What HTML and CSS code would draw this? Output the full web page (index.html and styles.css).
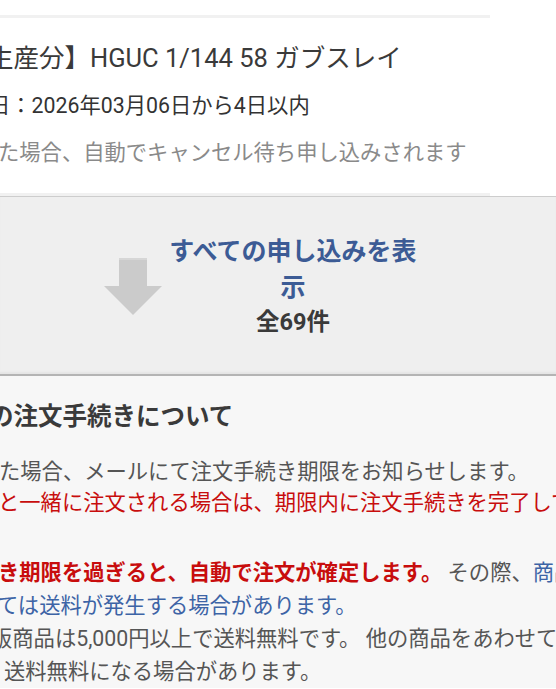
FILE: index.html
```html
<!DOCTYPE html>
<html lang="ja">
<head>
  <meta charset="utf-8">
  <title>申し込み一覧</title>
  <meta name="viewport" content="width=device-width,initial-scale=1">
  <link rel="stylesheet" href="styles.css">
</head>

<body class="entry-page">
  <div class="content">
    <div class="card-edge"></div>

    <div class="card">
      <p class="line item-title cut-title">生産分】HGUC 1/144 58 ガブスレイ</p>
      <p class="line item-date cut-date">日：2026年03月06日から4日以内</p>
      <p class="line item-note cut-note">た場合、自動でキャンセル待ち申し込みされます</p>
    </div>
    <div class="card-edge"></div>

    <a class="show-all" href="#">
      <svg class="show-all_arrow" width="58" height="57" viewBox="0 0 58 57">
        <polygon points="15,0 43,0 43,28 58,28 29,57 0,28 15,28" fill="#cbcbcb"/>
        <polygon points="15,0 43,0 43,2 15,2" fill="#d6d6d6"/>
      </svg>
      <span class="show-all_text">
        <span class="show-all_label">すべての申し込みを表示</span>
        <span class="show-all_count">全69件</span>
      </span>
    </a>

    <section class="notice">
      <h2 class="line notice_title cut-heading">の注文手続きについて</h2>

      <p class="notice_block">
        <span class="line cut-body">た場合、メールにて注文手続き期限をお知らせします。</span>
        <span class="line is-red cut-red">と一緒に注文される場合は、期限内に注文手続きを完了してください。</span>
      </p>

      <p class="notice_block notice_block--wide">
        <span class="line cut-strong"><strong class="is-red">き期限を過ぎると、自動で注文が確定します。</strong> その際、<a class="notice_link" href="#">商品によっては</a></span>
        <span class="line cut-link"><a class="notice_link" href="#">ては送料が発生する場合があります。</a></span>
        <span class="line cut-sales">販商品は5,000円以上で送料無料です。 他の商品をあわせてご注文いただくと</span>
        <span class="line cut-last">送料無料になる場合があります。</span>
      </p>
    </section>
  </div>
</body>
</html>
```

FILE: styles.css
```css
html,
body {
  margin: 0;
  padding: 0;
  background: #fff;
}

.entry-page {
  width: 556px;
  height: 689px;
  overflow: hidden;

  font-family: Roboto, "Noto Sans CJK JP", sans-serif;
  color: #333;
}

.content {
  padding-top: 15px;
}

/* the soft strip under each white card */
.card-edge {
  height: 3px;
  margin-right: 66px;
  background: #f1f1f1;
}

.card {
  padding: 24px 0 25px;
  background: #fff;
}

.line {
  display: block;
  margin-top: 0;
  margin-bottom: 0;
  white-space: nowrap;
}

.item-title {
  font-size: 25.5px;
  line-height: 33px;
  color: #3a3a3a;
}

.item-date {
  margin-top: 16px;
  font-size: 21.3px;
  line-height: 30px;
  color: #333;
}

.item-note {
  margin-top: 17px;
  font-size: 21.3px;
  line-height: 30px;
  color: #8a8a8a;
}

/* the reference is cropped on the left, each line starts off-screen */
.cut-title { margin-left: -12px; }
.cut-date { margin-left: -11px; }
.cut-note { margin-left: -2px; }
.cut-heading { margin-left: -11px; }
.cut-body { margin-left: -1px; }
.cut-red { margin-left: -2px; }
.cut-strong { margin-left: -2px; }
.cut-link { margin-left: -3px; }
.cut-sales { margin-left: -9px; }
.cut-last { margin-left: 4px; }

.show-all {
  display: flex;
  align-items: center;
  height: 177px;
  padding-left: 104px;

  background: #efefef;
  border-top: 1px solid #cdcdcd;
  border-bottom: 2px solid #b4b4b4;
  box-shadow: inset 0 -3px 2px -1px #e4e4e4;
  text-decoration: none;
}

.show-all_arrow {
  flex: none;
  margin-top: 2px;
}

.show-all_text {
  display: flex;
  flex-direction: column;
  align-items: center;
  width: 262px;
  text-align: center;
}

.show-all_label {
  font-size: 25px;
  font-weight: 700;
  line-height: 36px;
  color: #3c5b95;
}

.show-all_count {
  font-size: 23.5px;
  font-weight: 700;
  line-height: 32px;
  color: #3a3a3a;
}

.notice {
  padding-top: 25px;
  background: #f7f7f7;
  font-size: 21.3px;
  color: #555;
}

.notice_title {
  font-size: 24.5px;
  font-weight: 700;
  line-height: 32px;
  color: #3a3a3a;
}

.notice_block {
  margin: 23px 0 0;
  line-height: 31px;
}

.notice_block--wide {
  margin-top: 38px;
  line-height: 33px;
}

.is-red {
  color: #c80d0d;
}

strong.is-red {
  font-weight: 700;
}

.notice_link {
  color: #3d64a6;
  text-decoration: none;
}
```
